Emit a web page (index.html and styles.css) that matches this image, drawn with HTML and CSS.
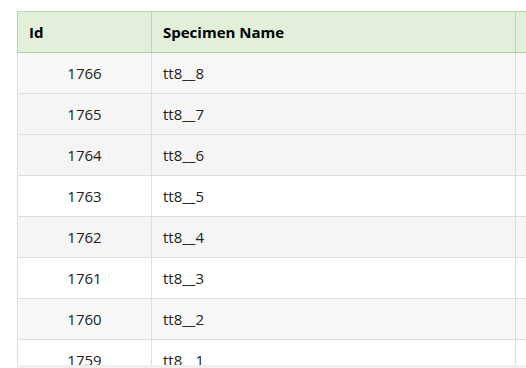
FILE: index.html
```html
<!DOCTYPE html>
<html>
<head>
<meta charset="utf-8">
<link rel="stylesheet" href="styles.css">
</head>
<body>
<div class="wrap">
  <div class="viewport">
    <div class="table">
      <div class="row head">
        <div class="cell c-id">Id</div>
        <div class="cell c-name">Specimen Name</div>
        <div class="cell c-rest"></div>
      </div>
      <div class="row bg-a"><div class="cell c-id num">1766</div><div class="cell c-name">tt8__8</div><div class="cell c-rest"></div></div>
      <div class="row bg-b"><div class="cell c-id num">1765</div><div class="cell c-name">tt8__7</div><div class="cell c-rest"></div></div>
      <div class="row bg-b"><div class="cell c-id num">1764</div><div class="cell c-name">tt8__6</div><div class="cell c-rest"></div></div>
      <div class="row bg-w"><div class="cell c-id num">1763</div><div class="cell c-name">tt8__5</div><div class="cell c-rest"></div></div>
      <div class="row bg-b"><div class="cell c-id num">1762</div><div class="cell c-name">tt8__4</div><div class="cell c-rest"></div></div>
      <div class="row bg-w"><div class="cell c-id num">1761</div><div class="cell c-name">tt8__3</div><div class="cell c-rest"></div></div>
      <div class="row bg-a"><div class="cell c-id num">1760</div><div class="cell c-name">tt8__2</div><div class="cell c-rest"></div></div>
      <div class="row bg-w"><div class="cell c-id num">1759</div><div class="cell c-name">tt8__1</div><div class="cell c-rest"></div></div>
    </div>
  </div>
  <div class="hscroll"></div>
</div>
</body>
</html>
```
FILE: styles.css
```css
html, body {
  margin: 0;
  padding: 0;
  background: #ffffff;
}
body {
  font-family: "Open Sans", "Noto Sans", sans-serif;
  font-size: 15px;
  color: #222;
}
.wrap {
  margin: 11px 0 0 17px;
}
.viewport {
  height: 354px;
  overflow: hidden;
}
.table {
  width: 700px;
}
.row {
  display: flex;
  height: 41px;
  box-sizing: border-box;
  border-bottom: 1px solid #dedede;
}
.cell {
  box-sizing: border-box;
  display: flex;
  align-items: center;
  padding: 0 11px;
  border-right: 1px solid #dedede;
}
.c-id {
  width: 135px;
  border-left: 1px solid #dedede;
}
.c-name {
  width: 364px;
}
.c-rest {
  flex: 1;
  border-right: none;
}
.num {
  justify-content: center;
}
.head {
  height: 42px;
  background: #e2efd9;
  border-top: 1px solid #b9ddb9;
  border-bottom: 1px solid #a5d4a5;
  font-weight: 700;
  color: #000;
}
.head .cell {
  border-color: #b0d9b0;
}
.bg-a { background: #f8f8f8; }
.bg-b { background: #f5f5f5; }
.bg-w { background: #ffffff; }
.hscroll {
  height: 3px;
  background: #efefef;
}
```
